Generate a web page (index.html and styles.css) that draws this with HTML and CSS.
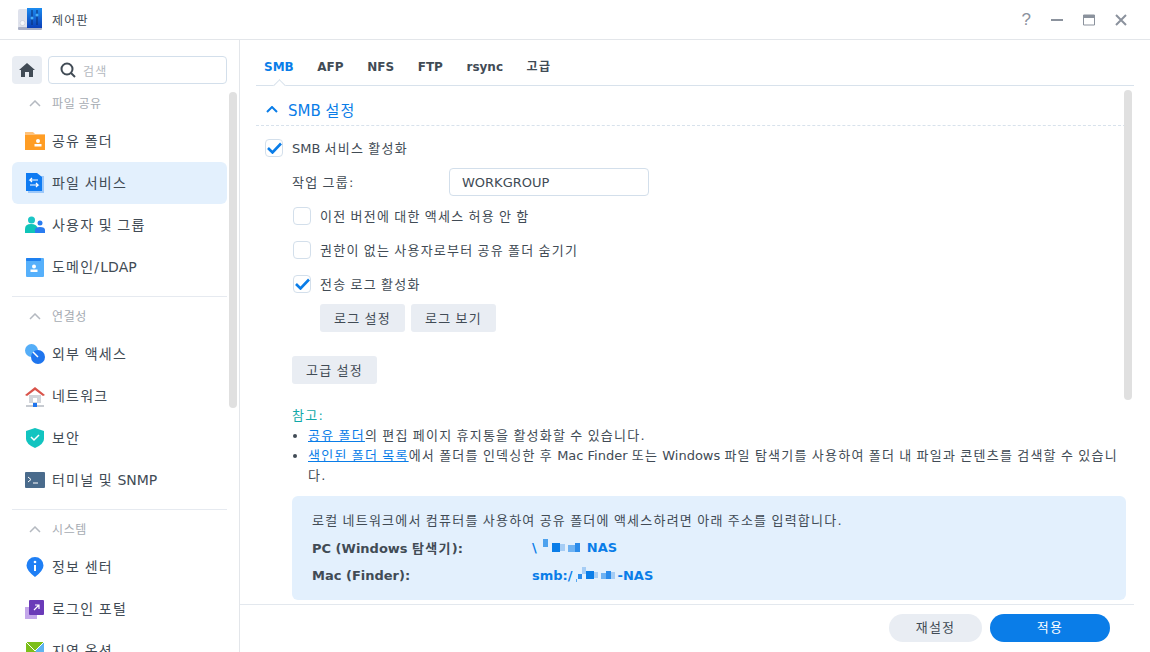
FILE: index.html
```html
<!DOCTYPE html>
<html lang="ko">

<head>
    <meta charset="UTF-8">
    <title>제어판</title>
    <link rel="stylesheet" href="styles.css">
</head>

<body>
    <div class="window">
        <header class="titlebar">
            <svg class="app-icon" width="24" height="23" viewBox="0 0 24 23">
                <defs>
                    <linearGradient id="appBlue" x1="0" y1="0" x2="0" y2="1">
                        <stop offset="0" stop-color="#1c8cf0" />
                        <stop offset="1" stop-color="#0b3fb8" />
                    </linearGradient>
                </defs>
                <rect x="0" y="1" width="10" height="20" rx="2" fill="#dfe2ec" />
                <rect x="0" y="19" width="24" height="3" rx="1" fill="#aab0c6" />
                <rect x="9" y="0" width="15" height="20" fill="url(#appBlue)" />
                <circle cx="4.500" cy="15" r="2.500" fill="#f6f7fa" stroke="#b8bdcc" stroke-width=".5" />
                <path d="M14 2v15M19 2v15" stroke="#0c2c70" stroke-width="1" />
                <circle cx="14" cy="10" r="1.500" fill="#4ab0f5" />
                <circle cx="19" cy="7" r="1.500" fill="#4ab0f5" />
            </svg>
            <span class="app-title">제어판</span>
            <div class="win-buttons">
                <span class="win-help">?</span>
                <svg width="12" height="12" viewBox="0 0 12 12"><rect y="5" width="12" height="2" fill="#8b929d" /></svg>
                <svg width="12" height="12" viewBox="0 0 12 12"><path d="M0.500 1h11v10h-11z" fill="none" stroke="#8b929d" /><rect y="1" width="12" height="3" fill="#8b929d" /></svg>
                <svg width="12" height="12" viewBox="0 0 12 12"><path d="M1 1l10 10M11 1l-10 10" stroke="#8b929d" stroke-width="2" /></svg>
            </div>
        </header>

        <div class="body">
            <aside class="sidebar">
                <div class="search-row">
                    <div class="home-btn">
                        <svg width="16" height="14" viewBox="0 0 16 14"><path d="M8 0L0 7h2v7h4V9h4v5h4V7h2z" fill="#414b55" /></svg>
                    </div>
                    <div class="search-box">
                        <svg width="16" height="16" viewBox="0 0 16 16"><circle cx="7" cy="7" r="5.500" fill="none" stroke="#414b55" stroke-width="2" /><path d="M11 11l4 4" stroke="#414b55" stroke-width="2" /></svg>
                        <span>검색</span>
                    </div>
                </div>

                <div class="nav-scroll"></div>

                <div class="group-head"><svg class="chev" width="12" height="7" viewBox="0 0 12 7"><path d="M1 6l5-5 5 5" fill="none" stroke="#b4b9c0" stroke-width="1.500" /></svg>파일 공유</div>
                <div class="nav-item">
                    <svg width="20" height="18" viewBox="0 0 20 18"><path d="M0 0h8l2 2h10v16H0z" fill="#ffc27a" /><rect y="3" width="20" height="15" fill="#ff9d24" /><circle cx="13" cy="9" r="2" fill="#fff" /><rect x="9.500" y="12" width="7" height="2.500" fill="#fff" /></svg>
                    <span>공유 폴더</span>
                </div>
                <div class="nav-item selected">
                    <svg width="18" height="20" viewBox="0 0 18 20"><rect x="2" y="3" width="16" height="17" fill="#9cc8fa" /><path d="M0 0h11l5 4v14H0z" fill="#0f7bf2" /><path d="M12 7H4l2-2M4 7l2 2M4 12h8l-2-2M12 12l-2 2" fill="none" stroke="#fff" stroke-width="1.200" /></svg>
                    <span>파일 서비스</span>
                </div>
                <div class="nav-item">
                    <svg width="20" height="18" viewBox="0 0 20 18"><circle cx="6.500" cy="4" r="3.500" fill="#1cc6c6" /><path d="M0 17v-4q0-5 6-5t7 5v4z" fill="#0fc4b8" /><circle cx="15" cy="7" r="2.500" fill="#2a7cf0" /><path d="M10 17v-3q0-3 5-3t5 3v3z" fill="#2a7cf0" /></svg>
                    <span>사용자 및 그룹</span>
                </div>
                <div class="nav-item">
                    <svg width="18" height="19" viewBox="0 0 18 19"><rect width="18" height="19" rx="1" fill="#56b0fb" /><rect width="15" height="3" rx="1" fill="#1e80f0" /><circle cx="8" cy="8.500" r="2" fill="#fff" /><rect x="4.500" y="11.500" width="7" height="2.500" fill="#fff" /></svg>
                    <span>도메인/<span class="en">LDAP</span></span>
                </div>

                <div class="nav-line"></div>

                <div class="group-head"><svg class="chev" width="12" height="7" viewBox="0 0 12 7"><path d="M1 6l5-5 5 5" fill="none" stroke="#b4b9c0" stroke-width="1.500" /></svg>연결성</div>
                <div class="nav-item">
                    <svg width="20" height="20" viewBox="0 0 20 20"><circle cx="6.500" cy="6.500" r="6.500" fill="#55aef8" /><circle cx="13" cy="13" r="7" fill="#1f75ee" /><path d="M8 8l5 5" stroke="#fff" stroke-width="1.500" /></svg>
                    <span>외부 액세스</span>
                </div>
                <div class="nav-item">
                    <svg width="20" height="21" viewBox="0 0 20 21"><path d="M4 9h12v8H4z" fill="#d2d5da" /><path d="M0 9l10-8 10 8-2 1-8-6-8 6z" fill="#d9534a" /><rect x="8" y="12" width="4" height="4" fill="#fff" /><rect x="1" y="19" width="18" height="2" fill="#c7cbd1" /><rect x="8" y="17" width="4" height="4" fill="#1f75ee" /></svg>
                    <span>네트워크</span>
                </div>
                <div class="nav-item">
                    <svg width="18" height="20" viewBox="0 0 18 20"><path d="M9 0l9 3v8q0 5-9 9-9-4-9-9V3z" fill="#12c4c0" /><path d="M5 9l3 3 5-5" fill="none" stroke="#fff" stroke-width="1.500" /></svg>
                    <span>보안</span>
                </div>
                <div class="nav-item">
                    <svg width="20" height="16" viewBox="0 0 20 16"><rect width="20" height="16" rx="1" fill="#4a6b8c" /><path d="M3 5l3 2.500-3 2.500M8 11h5" fill="none" stroke="#fff" /></svg>
                    <span>터미널 및 <span class="en">SNMP</span></span>
                </div>

                <div class="nav-line"></div>

                <div class="group-head"><svg class="chev" width="12" height="7" viewBox="0 0 12 7"><path d="M1 6l5-5 5 5" fill="none" stroke="#b4b9c0" stroke-width="1.500" /></svg>시스템</div>
                <div class="nav-item">
                    <svg width="18" height="20" viewBox="0 0 18 20"><path d="M9 0a8.500 8.500 0 0 1 8.500 8.500q0 5-8.500 11.500Q.500 13.500.500 8.500A8.500 8.500 0 0 1 9 0z" fill="#1f7ff5" /><circle cx="9" cy="5" r="1.300" fill="#fff" /><rect x="8" y="8" width="2" height="6" fill="#fff" /></svg>
                    <span>정보 센터</span>
                </div>
                <div class="nav-item">
                    <svg width="20" height="19" viewBox="0 0 20 19"><rect y="7" width="12" height="12" fill="#c3a6ea" /><rect x="4" width="15" height="15" rx="1" fill="#6a3ab8" /><path d="M9 10l5-5M10 5h4v4" fill="none" stroke="#fff" stroke-width="1.200" /></svg>
                    <span>로그인 포털</span>
                </div>
                <div class="nav-item">
                    <svg width="18" height="18" viewBox="0 0 18 18"><rect width="18" height="18" fill="#7cbf1a" /><path d="M9 9L18 0v18z" fill="#5eb4f0" /><path d="M0 0l9 9 9-9" fill="none" stroke="#fff" /></svg>
                    <span>지역 옵션</span>
                </div>
            </aside>

            <main class="main">
                <nav class="tabs">
                    <span class="tab en active">SMB</span>
                    <span class="tab en">AFP</span>
                    <span class="tab en">NFS</span>
                    <span class="tab en">FTP</span>
                    <span class="tab en">rsync</span>
                    <span class="tab">고급</span>
                </nav>
                <div class="content">
                    <div class="main-scroll"></div>
                    <div class="section-head">
                        <svg width="12" height="7" viewBox="0 0 12 7"><path d="M1 6l5-5 5 5" fill="none" stroke="#0a7de8" stroke-width="2" /></svg>
                        <span><span class="en">SMB</span> 설정</span>
                    </div>

                    <div class="form">
                        <label class="check-row">
                            <span class="box"><svg width="15" height="12" viewBox="0 0 15 12"><path d="M1 6l4.500 4.500 8.500-9" fill="none" stroke="#0a7de8" stroke-width="2.600" /></svg></span>
                            <span><span class="en">SMB</span> 서비스 활성화</span>
                        </label>
                        <div class="field-row">
                            <span class="field-label">작업 그룹:</span>
                            <div class="text-input en">WORKGROUP</div>
                        </div>
                        <label class="check-row sub">
                            <span class="box"></span>
                            이전 버전에 대한 액세스 허용 안 함
                        </label>
                        <label class="check-row sub">
                            <span class="box"></span>
                            권한이 없는 사용자로부터 공유 폴더 숨기기
                        </label>
                        <label class="check-row sub">
                            <span class="box"><svg width="15" height="12" viewBox="0 0 15 12"><path d="M1 6l4.500 4.500 8.500-9" fill="none" stroke="#0a7de8" stroke-width="2.600" /></svg></span>
                            전송 로그 활성화
                        </label>
                        <div class="btn-row">
                            <button class="btn">로그 설정</button>
                            <button class="btn">로그 보기</button>
                        </div>
                        <div class="adv-row">
                            <button class="btn">고급 설정</button>
                        </div>
                    </div>

                    <div class="note">
                        <div class="note-title">참고:</div>
                        <ul>
                            <li><a>공유 폴더</a>의 편집 페이지 휴지통을 활성화할 수 있습니다.</li>
                            <li><a>색인된 폴더 목록</a>에서 폴더를 인덱싱한 후 <span class="en">Mac Finder</span> 또는 <span class="en">Windows</span> 파일 탐색기를 사용하여 폴더 내 파일과 콘텐츠를 검색할 수 있습니다.</li>
                        </ul>
                    </div>

                    <div class="info-box">
                        <div class="info-line">로컬 네트워크에서 컴퓨터를 사용하여 공유 폴더에 액세스하려면 아래 주소를 입력합니다.</div>
                        <div class="info-row">
                            <b><span class="en">PC (Windows</span> 탐색기<span class="en">):</span></b>
                            <span class="addr">\<svg class="blur" width="50" height="16" viewBox="0 0 50 16"><rect x="6" y="0" width="5" height="8" fill="#4ea2ee" /><rect x="15" y="4" width="8" height="9" fill="#0a7de8" /><rect x="23" y="5" width="5" height="7" fill="#a6cdf5" /><rect x="31" y="6" width="7" height="7" fill="#6fb2f2" /><rect x="38" y="4" width="5" height="9" fill="#2c8ceb" /></svg>NAS</span>
                        </div>
                        <div class="info-row">
                            <b><span class="en">Mac (Finder):</span></b>
                            <span class="addr">smb:/<svg class="blur" width="45" height="16" viewBox="0 0 45 16"><rect x="3" y="12" width="1" height="3" fill="#5aa8f0" /><rect x="5" y="7" width="4" height="5" fill="#2c8ceb" /><rect x="9" y="0" width="4" height="7" fill="#a6cdf5" /><rect x="13" y="4" width="8" height="8" fill="#0a7de8" /><rect x="21" y="5" width="4" height="6" fill="#a6cdf5" /><rect x="28" y="6" width="5" height="6" fill="#6fb2f2" /><rect x="33" y="4" width="5" height="8" fill="#2c8ceb" /><rect x="38" y="5" width="4" height="7" fill="#a6cdf5" /></svg>-NAS</span>
                        </div>
                    </div>
                </div>
                <footer class="footer">
                    <button class="pill">재설정</button>
                    <button class="pill primary">적용</button>
                </footer>
            </main>
        </div>
    </div>
</body>

</html>
```

FILE: styles.css
```css
* {
    box-sizing: border-box;
}

html,
body {
    height: 100%;
    margin: 0;
    overflow: hidden;
}

/* hangul in the reference runs wider than Noto CJK, so space it out
   and take the spacing back for latin runs (.en) */
body {
    background: #fff;
    color: #414b55;
    font-family: "DejaVu Sans", "Noto Sans CJK KR", sans-serif;
    font-size: 13px;
    letter-spacing: .095em;
    word-spacing: -.095em;
}

.en {
    letter-spacing: 0;
    word-spacing: 0;
}

.window {
    display: flex;
    flex-direction: column;
    height: 652px;
}

/* Title bar */
.titlebar {
    display: flex;
    align-items: center;
    flex: none;
    height: 40px;
    padding: 0 23px 0 18px;
    border-bottom: 1px solid #e3e6ea;
}

.app-title {
    margin-left: 10px;
    font-size: 12px;
    flex: 1;
}

.win-buttons {
    display: flex;
    align-items: center;
    gap: 20px;
}

.win-help {
    color: #8b929d;
    font-family: "Liberation Sans", sans-serif;
    font-size: 17px;
    letter-spacing: 0;
}

.body {
    display: flex;
    flex: 1;
    min-height: 0;
}

/* Sidebar */
.sidebar {
    position: relative;
    flex: none;
    width: 240px;
    overflow: hidden;
    padding: 16px 12px 0;
    border-right: 1px solid #e3e6ea;
}

.search-row {
    display: flex;
    gap: 6px;
    height: 28px;
}

.home-btn {
    display: flex;
    align-items: center;
    justify-content: center;
    width: 30px;
    background: #e9edf3;
    border-radius: 4px;
}

.search-box {
    display: flex;
    align-items: center;
    gap: 7px;
    width: 179px;
    padding-left: 11px;
    border: 1px solid #d3dfeb;
    border-radius: 4px;
    color: #b4b9c0;
    font-size: 12px;
}

.nav-scroll {
    position: absolute;
    top: 52px;
    left: 229px;
    width: 8px;
    height: 316px;
    background: #e0e0e0;
    border-radius: 4px;
}

.group-head {
    display: flex;
    align-items: center;
    height: 34px;
    margin-top: 2px;
    padding: 0 0 2px 17px;
    color: #a6abb2;
    font-size: 12px;
    letter-spacing: .05em;
    gap: 11px;
}

.chev {
    margin-top: 2px;
}

.nav-item {
    display: grid;
    grid-template-columns: 20px 1fr;
    column-gap: 7px;
    align-items: center;
    justify-items: start;
    width: 215px;
    height: 42px;
    padding-left: 13px;
    border-radius: 6px;
    font-size: 14px;
}

.nav-item svg {
    justify-self: center;
}

.nav-item > span {
    margin-bottom: 2px;
}

.nav-item.selected {
    background: #e3f0fd;
}

.nav-line {
    width: 215px;
    height: 1px;
    margin-top: 8px;
    background: #e6eaf0;
}

/* Main pane */
.main {
    display: flex;
    flex-direction: column;
    flex: 1;
    min-width: 0;
}

.tabs {
    position: relative;
    display: flex;
    align-items: baseline;
    flex: none;
    gap: 23.6px;
    width: 878px;
    height: 46px;
    margin-left: 16px;
    padding: 17px 0 0 8px;
    border-bottom: 1px solid #d8e2ec;
    font-size: 12px;
    font-weight: 700;
}

.tab.active {
    color: #0a7de8;
}

.tab.active::after {
    content: "";
    position: absolute;
    left: 19px;
    top: 41px;
    width: 8px;
    height: 8px;
    background: #fff;
    border-top: 1px solid #d8e2ec;
    border-left: 1px solid #d8e2ec;
    transform: rotate(45deg);
}

.content {
    position: relative;
    flex: 1;
    min-height: 0;
    overflow: hidden;
    padding: 0 24px 0 16px;
}

.main-scroll {
    position: absolute;
    top: 4px;
    left: 884px;
    width: 8px;
    height: 310px;
    background: #e0e0e0;
    border-radius: 4px;
}

.section-head {
    display: flex;
    align-items: center;
    gap: 10px;
    height: 40px;
    padding: 8px 0 0 10px;
    border-bottom: 1px dashed #d8e2ec;
    color: #0a7de8;
    font-size: 15px;
}

.form {
    padding-top: 5px;
}

.check-row {
    display: flex;
    align-items: center;
    gap: 9px;
    height: 34px;
    padding: 0 0 2px 9px;
}

.check-row.sub {
    padding-left: 37px;
}

.box {
    display: flex;
    align-items: center;
    justify-content: center;
    flex: none;
    width: 18px;
    height: 18px;
    margin-top: 2px;
    border: 1px solid #d3dfeb;
    border-radius: 4px;
}

.field-row {
    display: flex;
    align-items: center;
    height: 34px;
    padding-left: 36px;
}

.field-label {
    width: 157px;
    margin-bottom: 2px;
}

.text-input {
    display: flex;
    align-items: center;
    width: 200px;
    height: 28px;
    padding-left: 12px;
    border: 1px solid #d3dfeb;
    border-radius: 4px;
}

.btn-row {
    display: flex;
    gap: 6px;
    padding: 3px 0 0 64px;
}

.adv-row {
    padding: 24px 0 0 36px;
}

.btn {
    width: 85px;
    height: 28px;
    padding: 0 0 2px;
    border: 0;
    border-radius: 3px;
    background: #e9edf3;
    color: #414b55;
    font: inherit;
    letter-spacing: inherit;
    word-spacing: inherit;
}

.note {
    margin: 21px 0 0 36px;
    line-height: 20px;
}

.note-title {
    color: #10a8a8;
    line-height: 21px;
}

.note ul {
    margin: 0;
    padding: 0 0 0 16px;
}

.note a {
    color: #0a7de8;
    text-decoration: underline;
}

.info-box {
    width: 834px;
    height: 104px;
    margin: 10px 0 0 36px;
    padding: 15px 20px;
    background: #e3f0fd;
    border-radius: 6px;
}

.info-line {
    line-height: 20px;
    margin-bottom: 2px;
}

.info-row {
    display: flex;
    align-items: center;
    height: 28px;
}

.info-row b {
    width: 220px;
}

.addr {
    display: flex;
    align-items: center;
    color: #0a7de8;
    font-weight: 700;
    letter-spacing: 0;
    word-spacing: 0;
}

.blur {
    flex: none;
}

/* Footer */
.footer {
    display: flex;
    flex: none;
    justify-content: flex-end;
    gap: 8px;
    width: 894px;
    height: 48px;
    padding: 9px 24px 0 0;
    border-top: 1px solid #e3e8ee;
}

.pill {
    width: 93px;
    height: 28px;
    padding: 0 0 3px;
    border: 0;
    border-radius: 14px;
    background: #e9edf3;
    color: #414b55;
    font: inherit;
    letter-spacing: inherit;
}

.pill.primary {
    width: 120px;
    background: #0a7de8;
    color: #fff;
}
```
